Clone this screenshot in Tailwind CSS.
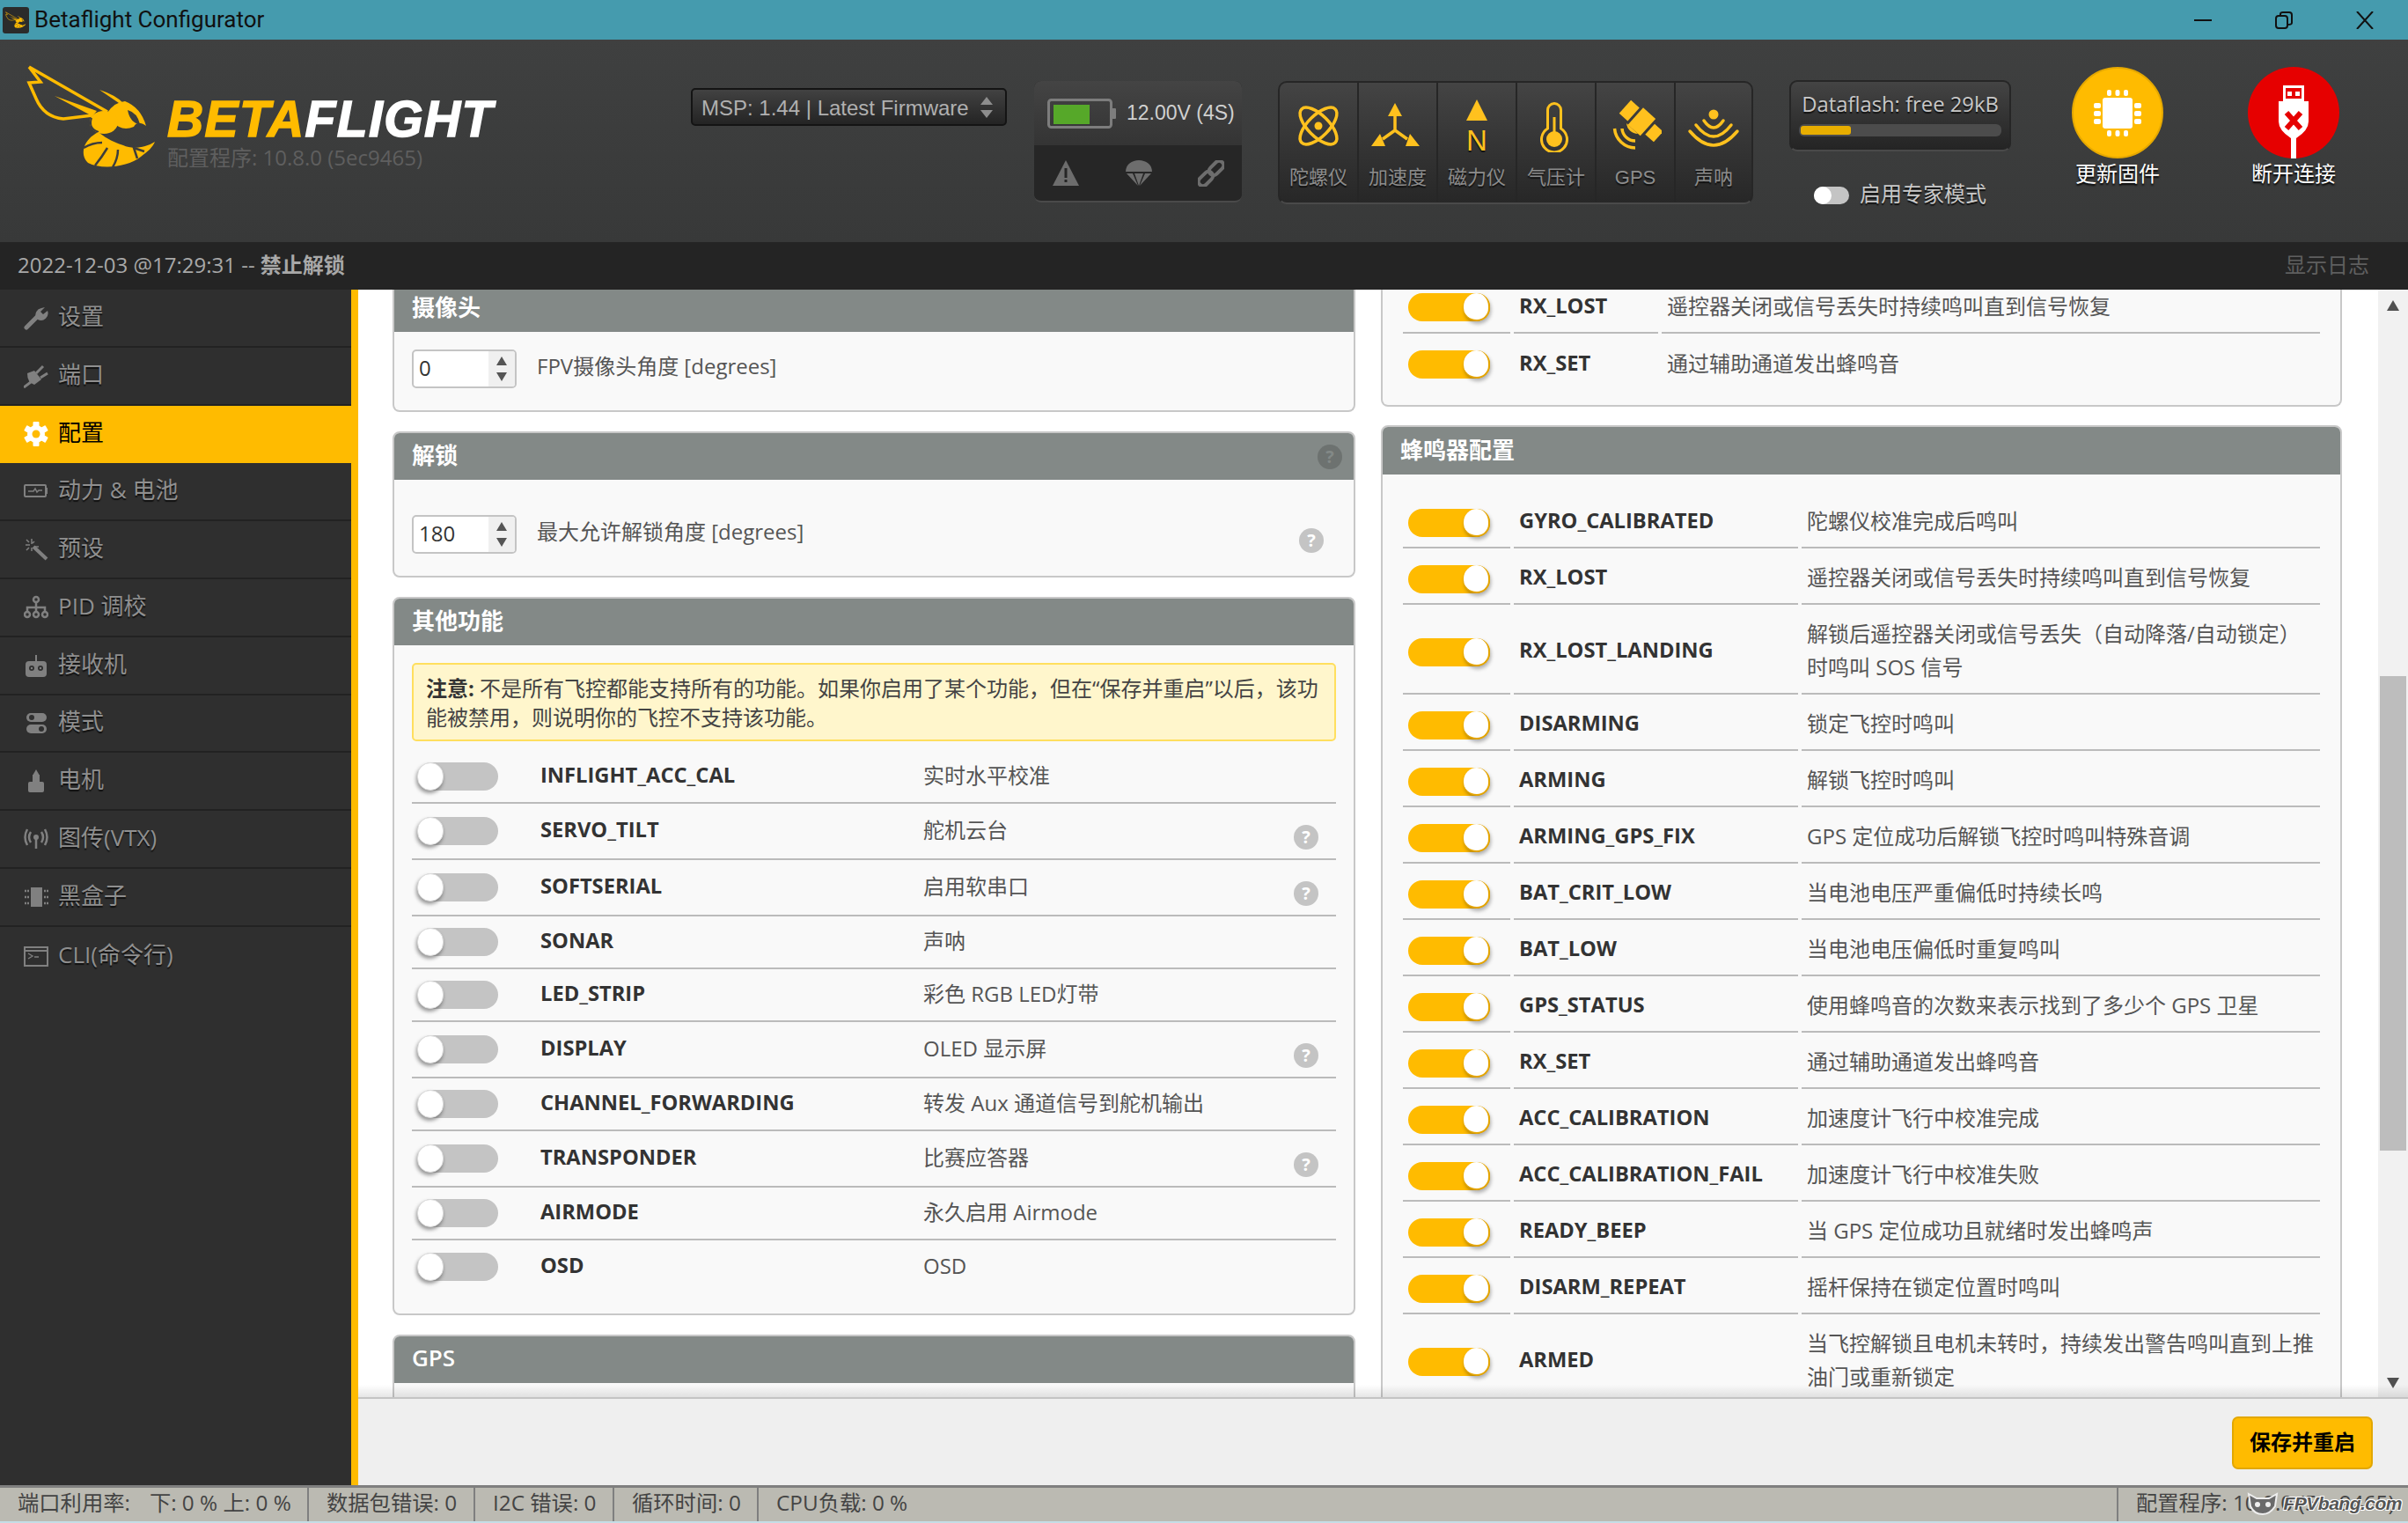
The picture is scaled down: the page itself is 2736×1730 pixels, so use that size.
<!DOCTYPE html>
<html lang="zh-CN">
<head>
  <meta charset="UTF-8">
  <title>Betaflight Configurator</title>
  <script src="https://cdn.jsdelivr.net/npm/@tailwindcss/browser@4"></script>
</head>
<body class="bg-white font-['Open_Sans','Noto_Sans_CJK_SC',sans-serif]">
<svg width="0" height="0" class="absolute">
  <symbol id="bee" viewBox="30 74 150 120">
    <path d="M33 76 L122 127 M33 76 L46 93 L33 94 L41 112 Q50 133 72 135 L105 131" fill="none" stroke="#ffbb00" stroke-width="3.5"/>
    <path d="M62 109 L110 126 L105 132 Z" fill="#ffbb00"/>
    <path d="M113 102 Q132 108 141 118 L135 117 Z" fill="#ffbb00"/>
    <path d="M122 128 Q130 116 142 115 Q160 122 166 143 Q156 136 152 144 Q138 150 128 138 Z" fill="#ffbb00"/>
    <path d="M145 125 Q156 128 159 141 Q148 140 145 125 Z" fill="#3c3d3d"/>
    <ellipse cx="118" cy="139" rx="16" ry="13" fill="#ffbb00"/>
    <path d="M104 134 Q100 146 112 150" fill="none" stroke="#3c3d3d" stroke-width="2"/>
    <path d="M112 150 C95 158 90 175 100 185 C115 193 145 190 160 178 C168 172 173 168 176 161 C165 168 150 170 140 165 C125 160 118 155 112 150 Z" fill="#ffbb00"/>
    <path d="M95 168 Q105 162 116 162 M108 188 Q116 178 122 168 M128 190 Q134 180 134 170 M156 180 L152 168 L164 172" fill="none" stroke="#3c3d3d" stroke-width="2.5"/>
  </symbol>
</svg>

<div class="w-[2736px] h-[1730px] flex flex-col overflow-hidden">

  <!-- title bar -->
  <div class="h-[45px] shrink-0 bg-[#459bae] flex items-center text-[#111]">
    <div class="ml-[3px] w-[30px] h-[30px] bg-[#2b2b2b] rounded-[3px] flex items-center justify-center">
      <svg width="24" height="24"><use href="#bee"/></svg>
    </div>
    <span class="ml-[6px] font-['Roboto'] text-[26px]">Betaflight Configurator</span>
    <div class="ml-auto flex items-center">
      <svg width="20" height="2" class="mr-[72px]"><rect width="20" height="2" fill="#111"/></svg>
      <svg width="20" height="20" class="mr-[72px]" fill="none" stroke="#111" stroke-width="2">
        <rect x="1" y="5" width="13" height="14" rx="3"/><path d="M6 5 V3 Q6 1 9 1 H16 Q19 1 19 4 V13 Q19 15 14 15"/>
      </svg>
      <svg width="20" height="20" class="mr-[39px]" stroke="#111" stroke-width="2"><path d="M1 0 L19 20 M19 0 L1 20"/></svg>
    </div>
  </div>

  <!-- header -->
  <div class="h-[230px] shrink-0 bg-linear-to-b from-[#3f4040] to-[#383939] flex items-start font-['Liberation_Sans','Noto_Sans_CJK_SC',sans-serif]">
    <svg width="150" height="120" class="ml-[30px] mt-[29px] shrink-0"><use href="#bee"/></svg>
    <div class="ml-[10px] mt-[61px] w-[400px] shrink-0">
      <div class="italic font-bold text-[57px] leading-[58px] text-white tracking-[1.4px] [-webkit-text-stroke:1.5px_currentColor]"><span class="text-[#ffbb00]">BETA</span>FLIGHT</div>
      <div class="font-['Open_Sans','Noto_Sans_CJK_SC'] text-[24px] leading-[30px] text-[#5f5f5f]">配置程序: 10.8.0 (5ec9465)</div>
    </div>

    <div class="ml-[195px] mt-[55px] w-[359px] h-[43px] shrink-0 rounded-[5px] border-2 border-[#141414] bg-linear-to-b from-[#424242] to-[#242424] flex items-center pl-[10px] pt-[3px] text-[24px] text-[#b0b0b0]">
      MSP: 1.44 | Latest Firmware
      <svg width="16" height="28" class="ml-[12px] mt-[-3px]" fill="#8d8d8d"><path d="M8 2 L15 11 H1 Z M1 17 H15 L8 26 Z"/></svg>
    </div>

    <div class="ml-[31px] mt-[47px] w-[236px] h-[138px] shrink-0 rounded-[8px] overflow-hidden border-b-2 border-[#4a4a4a] bg-[#262626] flex flex-col">
      <div class="h-[73px] bg-linear-to-b from-[#444] to-[#343434] flex items-center pl-[15px]">
        <svg width="78" height="34" fill="none">
          <rect x="1.5" y="1.5" width="71" height="31" rx="3" stroke="#7d7d7d" stroke-width="3"/>
          <rect x="7" y="7" width="41" height="22" fill="#56a829"/>
          <rect x="73" y="11" width="5" height="12" rx="1" fill="#7d7d7d"/>
        </svg>
        <span class="ml-[12px] text-[23px] text-[#d0d0d0] whitespace-nowrap">12.00V (4S)</span>
      </div>
      <div class="flex-1 flex items-center justify-between pl-[20px] pr-[20px]">
        <svg width="32" height="30" fill="#6d6d6d"><path d="M16 0 L31 29 H1 Z"/><rect x="14.5" y="9" width="3" height="11" fill="#262626"/><rect x="14.5" y="22" width="3" height="3" fill="#262626"/></svg>
        <svg width="32" height="30" fill="#6d6d6d"><path d="M1 13 C1 5 8 0 16 0 C24 0 31 5 31 13 Z"/><path d="M2 15 H9 L15 29 Z M11 15 H21 L16 29 Z M23 15 H30 L17 29 Z"/></svg>
        <svg width="30" height="30" fill="none" stroke="#6d6d6d" stroke-width="4"><g transform="rotate(45 15 15)"><rect x="10" y="-3" width="10" height="19" rx="5"/><rect x="10" y="14" width="10" height="19" rx="5"/></g></svg>
      </div>
    </div>

    <!-- sensors -->
    <div class="ml-[41px] mt-[47px] w-[540px] h-[140px] shrink-0 rounded-[10px] border-2 border-[#262626] border-b-[#4a4a4a] bg-linear-to-b from-[#444] to-[#272727] flex text-[22px] text-[#8c8c8c] [text-shadow:0_2px_1px_#111] overflow-hidden">
      <div class="w-[90px] flex flex-col items-center pt-[19px] border-r-2 border-[#262626]">
        <svg width="60" height="60" fill="none" stroke="#ffc11e" stroke-width="3.5"><ellipse cx="30" cy="30" rx="27" ry="12" transform="rotate(45 30 30)"/><ellipse cx="30" cy="30" rx="27" ry="12" transform="rotate(-45 30 30)"/><circle cx="30" cy="30" r="4.5" fill="#ffc11e" stroke="none"/></svg>
        <span class="mt-[12px]">陀螺仪</span>
      </div>
      <div class="w-[90px] flex flex-col items-center pt-[19px] border-r-2 border-[#262626]">
        <svg width="60" height="60" fill="#ffc11e"><path d="M27 4 L35 19 H19 Z M0 53 H16 L10 39 Z M55 53 H39 L44 39 Z"/><path d="M27 17 V35 L13 45 M27 35 L41 45" fill="none" stroke="#ffc11e" stroke-width="3.5"/></svg>
        <span class="mt-[12px]">加速度</span>
      </div>
      <div class="w-[90px] flex flex-col items-center pt-[19px] border-r-2 border-[#262626]">
        <svg width="60" height="60" fill="#ffc11e"><path d="M30 0 L42 24 H18 Z"/><text x="30" y="58" text-anchor="middle" font-size="33" font-family="Liberation Sans">N</text></svg>
        <span class="mt-[12px]">磁力仪</span>
      </div>
      <div class="w-[90px] flex flex-col items-center pt-[19px] border-r-2 border-[#262626]">
        <svg width="60" height="60" fill="none" stroke="#ffc11e" stroke-width="3"><path d="M20.5 33 V12 A7.5 7.5 0 0 1 35.5 12 V33 A14.5 14.5 0 1 1 20.5 33 Z"/><circle cx="28" cy="45" r="9" fill="#ffc11e" stroke="none"/><rect x="26.5" y="20" width="3" height="20" fill="#ffc11e" stroke="none"/></svg>
        <span class="mt-[12px]">气压计</span>
      </div>
      <div class="w-[90px] flex flex-col items-center pt-[19px] border-r-2 border-[#262626]">
        <svg width="60" height="60" fill="#ffc11e"><g transform="translate(37 25) rotate(42)"><rect x="-25" y="-10" width="13" height="20"/><rect x="-9" y="-13" width="19" height="26"/><rect x="13" y="-8" width="13" height="16"/></g><path d="M20 27 A 13 13 0 0 0 33 39 Z"/><path d="M6.5 33 A 24 24 0 0 0 30 55 M15 33 A 15 15 0 0 0 30 47" fill="none" stroke="#ffc11e" stroke-width="3.5"/></svg>
        <span class="mt-[12px]">GPS</span>
      </div>
      <div class="flex-1 flex flex-col items-center pt-[19px]">
        <svg width="60" height="60" fill="none" stroke="#ffc11e" stroke-width="3.5" stroke-linecap="round"><circle cx="30" cy="17" r="5.5" fill="#ffc11e" stroke="none"/><path d="M19 24 Q30 40 41 24 M10 29 Q30 55 50 29 M3 36 Q30 68 57 36"/></svg>
        <span class="mt-[12px]">声呐</span>
      </div>
    </div>

    <!-- dataflash + expert mode -->
    <div class="ml-[41px] w-[252px] shrink-0 font-['Open_Sans','Noto_Sans_CJK_SC']">
      <div class="mt-[46px] h-[81px] rounded-[9px] border-2 border-[#262626] border-b-[#4a4a4a] bg-linear-to-b from-[#444] to-[#242424] px-[9px] pt-[7px]">
        <div class="text-center text-[23.8px] leading-[36px] text-[#c8c8c8] whitespace-nowrap [text-shadow:0_2px_1px_#111]">Dataflash: free 29kB</div>
        <div class="mt-[5px] h-[14px] rounded-[6px] bg-[#4c4c4c] p-[2px]"><div class="w-[57px] h-[10px] rounded-[3px] bg-[#e8ae00]"></div></div>
      </div>
      <div class="mt-[30px] ml-[28px] flex items-center">
        <div class="w-[40px] h-[20px] mt-[3px] rounded-full bg-[#c4c4c4]"><div class="w-[20px] h-[20px] rounded-full bg-white"></div></div>
        <span class="ml-[12px] text-[24px] text-[#c8c8c8] whitespace-nowrap [text-shadow:0_2px_1px_#111]">启用专家模式</span>
      </div>
    </div>

    <div class="ml-[70px] mt-[31px] w-[102px] flex flex-col items-center shrink-0">
      <svg width="104" height="104" class="shrink-0">
        <circle cx="52" cy="52" r="51" fill="#ffbb00" stroke="#e5a800" stroke-width="2"/>
        <g fill="#fff">
          <rect x="35" y="35" width="34" height="35" rx="3"/>
          <rect x="40" y="26" width="5" height="7" rx="2"/><rect x="49.5" y="26" width="5" height="7" rx="2"/><rect x="59" y="26" width="5" height="7" rx="2"/>
          <rect x="40" y="72" width="5" height="7" rx="2"/><rect x="49.5" y="72" width="5" height="7" rx="2"/><rect x="59" y="72" width="5" height="7" rx="2"/>
          <rect x="25" y="41" width="8" height="6" rx="2"/><rect x="25" y="50" width="8" height="6" rx="2"/><rect x="25" y="59" width="8" height="6" rx="2"/>
          <rect x="71" y="41" width="8" height="6" rx="2"/><rect x="71" y="50" width="8" height="6" rx="2"/><rect x="71" y="59" width="8" height="6" rx="2"/>
        </g>
      </svg>
      <span class="mt-[2px] text-[24px] leading-[30px] text-white whitespace-nowrap [text-shadow:0_2px_2px_#000] font-['Open_Sans','Noto_Sans_CJK_SC']">更新固件</span>
    </div>
    <div class="ml-[97px] mt-[31px] w-[104px] flex flex-col items-center shrink-0">
      <svg width="104" height="104" class="shrink-0">
        <circle cx="52" cy="52" r="52" fill="#e60000"/>
        <path d="M35 39 H69 V62 Q69 72 55 81 V104 H49 V81 Q35 72 35 62 Z M40 21 H64 V39 H40 Z" fill="#fff"/>
        <rect x="43" y="24" width="18" height="12" fill="#e60000"/>
        <rect x="45" y="28" width="5" height="5" fill="#fff"/><rect x="54" y="28" width="5" height="5" fill="#fff"/>
        <path d="M44 52 L60 70 M60 52 L44 70" stroke="#e60000" stroke-width="6"/>
      </svg>
      <span class="mt-[2px] text-[24px] leading-[30px] text-white whitespace-nowrap [text-shadow:0_2px_2px_#000] font-['Open_Sans','Noto_Sans_CJK_SC']">断开连接</span>
    </div>
  </div>

  <!-- log bar -->
  <div class="h-[54px] shrink-0 bg-[#242424] flex items-center pl-[20px] pr-[44px] pb-[3px] text-[24px] text-[#a8a8a8]">
    <span>2022-12-03 @17:29:31 -- <b class="font-bold">禁止解锁</b></span>
    <span class="ml-auto text-[#5f5f5f]">显示日志</span>
  </div>

  <div class="flex-1 flex min-h-0">
    <!-- sidebar -->
    <div id="nav" class="w-[407px] shrink-0 bg-[#2f2f2f] border-r-8 border-[#ffbb00]"></div>

    <div class="flex-1 flex flex-col min-w-0">
      <div class="h-[1258px] shrink-0 flex relative overflow-hidden bg-white">
        <div class="w-[2295px] shrink-0 pl-[39px] flex gap-[29px] items-start text-[24px] text-[#555]">

          <!-- left column -->
          <div class="w-[1094px] shrink-0 flex flex-col gap-[22px]">
            <div class="h-[139px] bg-[#f9f9f9] border-2 border-t-0 border-[#c8c8c8] rounded-b-[8px]">
              <div class="h-[48px] bg-[#838987] text-white font-bold text-[26px] pl-[20px] pb-[8px] flex items-center">摄像头</div>
              <div class="pl-[20px] pt-[20px] flex items-center">
                <div class="w-[119px] h-[44px] rounded-[5px] border-2 border-[#c4c4c4] bg-white flex overflow-hidden">
                  <span class="flex-1 pl-[6px] leading-[38px] text-[#333]">0</span>
                  <div class="w-[30px] bg-[#f0f0f0] flex flex-col items-center justify-center gap-[8px]">
                    <svg width="12" height="10" fill="#555"><path d="M6 0 L12 10 H0 Z"/></svg>
                    <svg width="12" height="10" fill="#555"><path d="M0 0 H12 L6 10 Z"/></svg>
                  </div>
                </div>
                <span class="ml-[23px] mt-[-7px]">FPV摄像头角度 [degrees]</span>
              </div>
            </div>

            <div class="h-[166px] bg-[#f9f9f9] border-2 border-[#c8c8c8] rounded-[8px] overflow-hidden">
              <div class="h-[53px] bg-[#838987] text-white font-bold text-[26px] pl-[20px] flex items-center">
                <span class="mt-[-3px]">解锁</span>
                <span class="ml-auto mr-[13px] w-[28px] h-[28px] rounded-full bg-[#6d7270] text-[#838987] font-bold text-[20px] flex items-center justify-center">?</span>
              </div>
              <div class="pl-[20px] pr-[34px] pt-[40px] flex items-center">
                <div class="w-[119px] h-[44px] rounded-[5px] border-2 border-[#c4c4c4] bg-white flex overflow-hidden">
                  <span class="flex-1 pl-[6px] leading-[38px] text-[#333]">180</span>
                  <div class="w-[30px] bg-[#f0f0f0] flex flex-col items-center justify-center gap-[8px]">
                    <svg width="12" height="10" fill="#555"><path d="M6 0 L12 10 H0 Z"/></svg>
                    <svg width="12" height="10" fill="#555"><path d="M0 0 H12 L6 10 Z"/></svg>
                  </div>
                </div>
                <span class="ml-[23px] mt-[-7px]">最大允许解锁角度 [degrees]</span>
                <span class="ml-auto mt-[14px] w-[28px] h-[28px] rounded-full bg-[#c4c4c4] text-white font-bold text-[20px] flex items-center justify-center">?</span>
              </div>
            </div>

            <div class="h-[816px] bg-[#f9f9f9] border-2 border-[#c8c8c8] rounded-[8px] overflow-hidden">
              <div class="h-[53px] bg-[#838987] text-white font-bold text-[26px] pl-[20px] pb-[3px] flex items-center">其他功能</div>
              <div class="pl-[20px] pr-[20px] pt-[20px]">
                <div class="h-[89px] rounded-[5px] border-2 border-[#ffdf5e] bg-[#fff6cc] pl-[14px] pt-[10px] leading-[33px] text-[#444] whitespace-nowrap">
                  <b class="text-[#333]">注意:</b> 不是所有飞控都能支持所有的功能。如果你启用了某个功能，但在“保存并重启”以后，该功<br>能被禁用，则说明你的飞控不支持该功能。
                </div>
                <div id="features" class="mt-[11px]"></div>
              </div>
            </div>

            <div class="h-[200px] bg-[#f9f9f9] border-2 border-[#c8c8c8] rounded-[8px] overflow-hidden">
              <div class="h-[53px] bg-[#838987] text-white font-semibold text-[26px] pl-[20px] pb-[4px] flex items-center">GPS</div>
            </div>
          </div>

          <!-- right column -->
          <div class="w-[1092px] shrink-0 flex flex-col gap-[21px]">
            <div class="h-[133px] bg-[#f9f9f9] border-2 border-t-0 border-[#c8c8c8] rounded-b-[8px] pl-[23px] pr-[23px]">
              <div id="beeperTop"></div>
            </div>
            <div class="bg-[#f9f9f9] border-2 border-[#c8c8c8] rounded-[8px] overflow-hidden h-[1200px]">
              <div class="h-[54px] bg-[#838987] text-white font-bold text-[26px] pl-[20px] pb-[2px] flex items-center">蜂鸣器配置</div>
              <div id="beeper" class="pl-[23px] pr-[23px] pt-[20px]"></div>
            </div>
          </div>
        </div>

        <!-- scrollbar -->
        <div class="w-[34px] shrink-0 ml-auto bg-[#f1f1f1] flex flex-col items-center">
          <svg width="14" height="12" class="mt-[12px] shrink-0" fill="#505050"><path d="M7 0 L14 12 H0 Z"/></svg>
          <div class="mt-[415px] w-[30px] h-[539px] shrink-0 bg-[#bdbdbd]"></div>
          <svg width="14" height="12" class="mt-[258px] shrink-0" fill="#505050"><path d="M0 0 H14 L7 12 Z"/></svg>
        </div>

        <div class="absolute left-0 right-0 bottom-0 h-[14px] bg-linear-to-b from-transparent to-black/10"></div>
      </div>

      <!-- save bar -->
      <div class="flex-1 bg-[#efefef] border-t-2 border-[#c4c4c4] flex items-start justify-end pr-[40px] pt-[20px]">
        <div class="w-[160px] h-[60px] rounded-[7px] bg-[#ffbb00] border-2 border-[#e2a700] text-black font-bold text-[24px] pb-[3px] flex items-center justify-center">保存并重启</div>
      </div>
    </div>
  </div>

  <!-- status bar -->
  <div class="h-[43px] shrink-0 bg-[#bbbab2] border-t-[3px] border-[#7f7f7f] border-b-2 border-b-[#c5dde6] flex items-center text-[24.3px] text-[#444] relative whitespace-nowrap">
    <div class="w-[351px] h-full pl-[20px] pb-[3px] border-r-2 border-[#7f7f7f] flex items-center">端口利用率:<span class="ml-[22px]">下: 0 % 上: 0 %</span></div>
    <div class="w-[189px] h-full pl-[20px] pb-[3px] border-r-2 border-[#7f7f7f] flex items-center">数据包错误: 0</div>
    <div class="w-[158px] h-full pl-[20px] pb-[3px] border-r-2 border-[#7f7f7f] flex items-center">I2C 错误: 0</div>
    <div class="w-[164px] h-full pl-[20px] pb-[3px] border-r-2 border-[#7f7f7f] flex items-center">循环时间: 0</div>
    <div class="pl-[20px] pb-[3px] flex items-center">CPU负载: 0 %</div>
    <div class="ml-auto w-[331px] h-full pl-[20px] pb-[3px] border-l-2 border-[#7f7f7f] flex items-center overflow-hidden">配置程序: 10.8.0 (5ec9465)</div>
    <div class="absolute right-[7px] top-[2px] flex items-center italic font-bold text-[21px] tracking-[-0.5px] text-[#555] [text-shadow:-1px_-1px_0_#fff,1px_-1px_0_#fff,-1px_1px_0_#fff,1px_1px_0_#fff] font-['Liberation_Sans']">
      <svg width="38" height="26" class="mr-[4px]" fill="#6a6a6a" stroke="#eee" stroke-width="2"><path d="M3 2 L12 7 H26 L35 2 L33 16 Q27 25 19 25 Q9 25 5 16 Z"/><circle cx="13" cy="14" r="3" fill="#eee" stroke="none"/><circle cx="25" cy="14" r="3" fill="#eee" stroke="none"/></svg>
      FPVbang.com
    </div>
  </div>
</div>

<script>
  const navIcons = {
    wrench: '<path d="M3 25 L15 13" stroke-width="5" stroke-linecap="round" stroke="#808080"/><path d="M14 14 A8 8 0 0 1 20 3 L24 2 L19 7 L22 10 L27 6 A8 8 0 0 1 16 16 Z" fill="#808080"/>',
    plug: '<path d="M0 27 L8 21 M14 11 L22 3 M19 16 L27 11" stroke="#808080" stroke-width="3"/><path d="M4 11 L12 8 L20 18 L12 24 Q4 22 4 11 Z" fill="#808080"/>',
    gear: '<g fill="#fff"><circle cx="14" cy="14" r="10"/><rect x="10.5" y="0" width="7" height="28" rx="1"/><rect x="10.5" y="0" width="7" height="28" rx="1" transform="rotate(60 14 14)"/><rect x="10.5" y="0" width="7" height="28" rx="1" transform="rotate(120 14 14)"/></g><circle cx="14" cy="14" r="4.5" fill="#ffbb00"/>',
    battery: '<rect x="1" y="7" width="24" height="13" rx="1" fill="none" stroke="#808080" stroke-width="2"/><rect x="25" y="10" width="2" height="7" fill="#808080"/><path d="M5 14 H11 L13 11 L15 15 L17 13 H21" fill="none" stroke="#808080" stroke-width="1.5"/>',
    wand: '<path d="M11 11 L26 25" stroke="#808080" stroke-width="4"/><path d="M9 2 V8 M2 9 H7 M12 5 L10 7 M3 3 L6 6 M3 15 L6 12 M13 11 H17 M9 12 V16" stroke="#808080" stroke-width="1.5"/>',
    tree: '<g fill="none" stroke="#808080" stroke-width="2.5"><circle cx="14" cy="5" r="3"/><circle cx="4" cy="22" r="3"/><circle cx="14" cy="22" r="3"/><circle cx="24" cy="22" r="3"/><path d="M14 8 V19 M4 19 V14 H24 V19"/></g>',
    radio: '<rect x="2" y="9" width="24" height="18" rx="4" fill="#808080"/><path d="M14 2 V9" stroke="#808080" stroke-width="2"/><circle cx="9" cy="17" r="3" fill="#2f2f2f"/><circle cx="19" cy="17" r="3" fill="#2f2f2f"/><circle cx="9" cy="17" r="1.2" fill="#808080"/><circle cx="19" cy="17" r="1.2" fill="#808080"/>',
    modes: '<rect x="3" y="3" width="23" height="10" rx="5" fill="#808080"/><circle cx="9" cy="8" r="3" fill="#2f2f2f"/><rect x="3" y="16" width="23" height="10" rx="5" fill="#808080"/><circle cx="20" cy="21" r="3" fill="#2f2f2f"/>',
    motor: '<rect x="5" y="15" width="18" height="12" rx="2" fill="#808080"/><rect x="10" y="7" width="8" height="9" fill="#808080"/><path d="M14 1 L18 8 H10 Z" fill="#808080"/>',
    vtx: '<circle cx="14" cy="12" r="3" fill="#808080"/><path d="M14 12 V25" stroke="#808080" stroke-width="2.5"/><path d="M8 6 Q4 12 8 18 M20 6 Q24 12 20 18 M4 3 Q-1 12 4 21 M24 3 Q29 12 24 21" fill="none" stroke="#808080" stroke-width="2.5"/>',
    chip: '<rect x="8" y="3" width="13" height="22" fill="#808080"/><path d="M1 7 H6 M1 14 H6 M1 21 H6 M23 7 H28 M23 14 H28 M23 21 H28" stroke="#808080" stroke-width="2.5" stroke-dasharray="2 1"/>',
    cli: '<rect x="1" y="4" width="26" height="21" fill="none" stroke="#808080" stroke-width="2"/><path d="M1 8 H27" stroke="#808080" stroke-width="2"/><path d="M5 11 L10 14 L5 17 M12 15 H17" fill="none" stroke="#808080" stroke-width="1.3"/>'
  };
  const navItems = [
    ['wrench', '设置'], ['plug', '端口'], ['gear', '配置'], ['battery', '动力 & 电池'], ['wand', '预设'], ['tree', 'PID 调校'],
    ['radio', '接收机'], ['modes', '模式'], ['motor', '电机'], ['vtx', '图传(VTX)'], ['chip', '黑盒子'], ['cli', 'CLI(命令行)']
  ];
  document.getElementById('nav').innerHTML = navItems.map(([icon, label], i) => {
    const row = i === 2
      ? 'h-[65.8px] flex items-center bg-[#ffbb00] text-black mr-[-8px] relative'
      : i === 11
        ? 'h-[65.8px] flex items-center text-[#8f8f8f] [text-shadow:0_2px_1px_#111]'
        : 'h-[65.8px] flex items-center border-b-2 border-[#222] text-[#8f8f8f] [text-shadow:0_2px_1px_#111]';
    return `<div class="${row}">
      <svg width="28" height="28" viewBox="0 0 28 28" class="ml-[27px]">${navIcons[icon]}</svg>
      <span class="ml-[11px] mt-[-3px] text-[26px] whitespace-nowrap">${label}</span>
    </div>`;
  }).join('');

  const toggleOff = '<div class="w-[92px] h-[32px] rounded-full bg-[#c4c4c4]"><div class="w-[30px] h-[32px] rounded-full bg-white border border-[#ddd] shadow-[-1px_3px_4px_rgba(0,0,0,.4)]"></div></div>';
  const toggleOn = '<div class="w-[93px] h-[32px] rounded-full bg-[#ffbb00] flex justify-end"><div class="w-[30px] h-[32px] rounded-full bg-white border-r-2 border-b-2 border-[#e5a500] shadow-[1px_3px_4px_rgba(0,0,0,.3)]"></div></div>';
  const help = '<span class="ml-auto mr-[20px] mt-[13px] shrink-0 w-[28px] h-[28px] rounded-full bg-[#c4c4c4] text-white font-bold text-[20px] flex items-center justify-center">?</span>';

  const features = [
    ['INFLIGHT_ACC_CAL', '实时水平校准'], ['SERVO_TILT', '舵机云台', 1], ['SOFTSERIAL', '启用软串口', 1], ['SONAR', '声呐'],
    ['LED_STRIP', '彩色 RGB LED灯带'], ['DISPLAY', 'OLED 显示屏', 1], ['CHANNEL_FORWARDING', '转发 Aux 通道信号到舵机输出'],
    ['TRANSPONDER', '比赛应答器', 1], ['AIRMODE', '永久启用 Airmode'], ['OSD', 'OSD']
  ];
  document.getElementById('features').innerHTML = features.map(([name, desc, hasHelp], i) => {
    const row = i === features.length - 1
      ? 'h-[60px] flex items-center'
      : hasHelp ? 'h-[64px] flex items-center border-b-2 border-[#bbb]' : 'h-[60px] flex items-center border-b-2 border-[#bbb]';
    return `<div class="${row}">
      <div class="w-[146px] shrink-0 pl-[6px]">${toggleOff}</div>
      <div class="w-[435px] shrink-0 mt-[-3px] font-bold text-[#333] text-[23.7px]">${name}</div>
      <div class="text-[24px] mt-[-3px] text-[#555]">${desc}</div>
      ${hasHelp ? help : ''}
    </div>`;
  }).join('');

  document.getElementById('beeperTop').innerHTML = `
    <div class="h-[50px] flex">
      <div class="w-[122px] border-b-2 border-[#bbb] pl-[6px] pt-[4px]">${toggleOn}</div>
      <div class="w-[164px] ml-[4px] border-b-2 border-[#bbb] pl-[6px] pb-[10px] flex items-center font-bold text-[23.7px] text-[#333]">RX_LOST</div>
      <div class="flex-1 ml-[4px] border-b-2 border-[#bbb] pl-[6px] pb-[10px] flex items-center">遥控器关闭或信号丢失时持续鸣叫直到信号恢复</div>
    </div>
    <div class="h-[64px] flex pt-[19px]">
      <div class="w-[122px] pl-[6px]">${toggleOn}</div>
      <div class="w-[164px] ml-[4px] pl-[6px] h-[29px] flex items-center font-bold text-[23.7px] text-[#333]">RX_SET</div>
      <div class="flex-1 ml-[4px] pl-[6px] h-[29px] flex items-center">通过辅助通道发出蜂鸣音</div>
    </div>`;

  const beepers = [
    ['GYRO_CALIBRATED', '陀螺仪校准完成后鸣叫'], ['RX_LOST', '遥控器关闭或信号丢失时持续鸣叫直到信号恢复'],
    ['RX_LOST_LANDING', '解锁后遥控器关闭或信号丢失（自动降落/自动锁定）<br>时鸣叫 SOS 信号', 1], ['DISARMING', '锁定飞控时鸣叫'],
    ['ARMING', '解锁飞控时鸣叫'], ['ARMING_GPS_FIX', 'GPS 定位成功后解锁飞控时鸣叫特殊音调'], ['BAT_CRIT_LOW', '当电池电压严重偏低时持续长鸣'],
    ['BAT_LOW', '当电池电压偏低时重复鸣叫'], ['GPS_STATUS', '使用蜂鸣音的次数来表示找到了多少个 GPS 卫星'], ['RX_SET', '通过辅助通道发出蜂鸣音'],
    ['ACC_CALIBRATION', '加速度计飞行中校准完成'], ['ACC_CALIBRATION_FAIL', '加速度计飞行中校准失败'], ['READY_BEEP', '当 GPS 定位成功且就绪时发出蜂鸣声'],
    ['DISARM_REPEAT', '摇杆保持在锁定位置时鸣叫'], ['ARMED', '当飞控解锁且电机未转时，持续发出警告鸣叫直到上推<br>油门或重新锁定', 1]
  ];
  document.getElementById('beeper').innerHTML = beepers.map(([name, desc, tall]) => {
    const height = tall ? 'h-[102px] flex' : 'h-[64px] flex';
    return `<div class="${height}">
      <div class="w-[122px] border-b-2 border-[#bbb] pl-[6px] pt-[8px] flex items-center">${toggleOn}</div>
      <div class="w-[323px] ml-[4px] border-b-2 border-[#bbb] pl-[6px] pt-[3px] flex items-center font-bold text-[23.7px] text-[#333] whitespace-nowrap">${name}</div>
      <div class="flex-1 ml-[4px] border-b-2 border-[#bbb] pl-[6px] pt-[4px] flex items-center leading-[38px] whitespace-nowrap"><div>${desc}</div></div>
    </div>`;
  }).join('');
</script>
</body>
</html>
